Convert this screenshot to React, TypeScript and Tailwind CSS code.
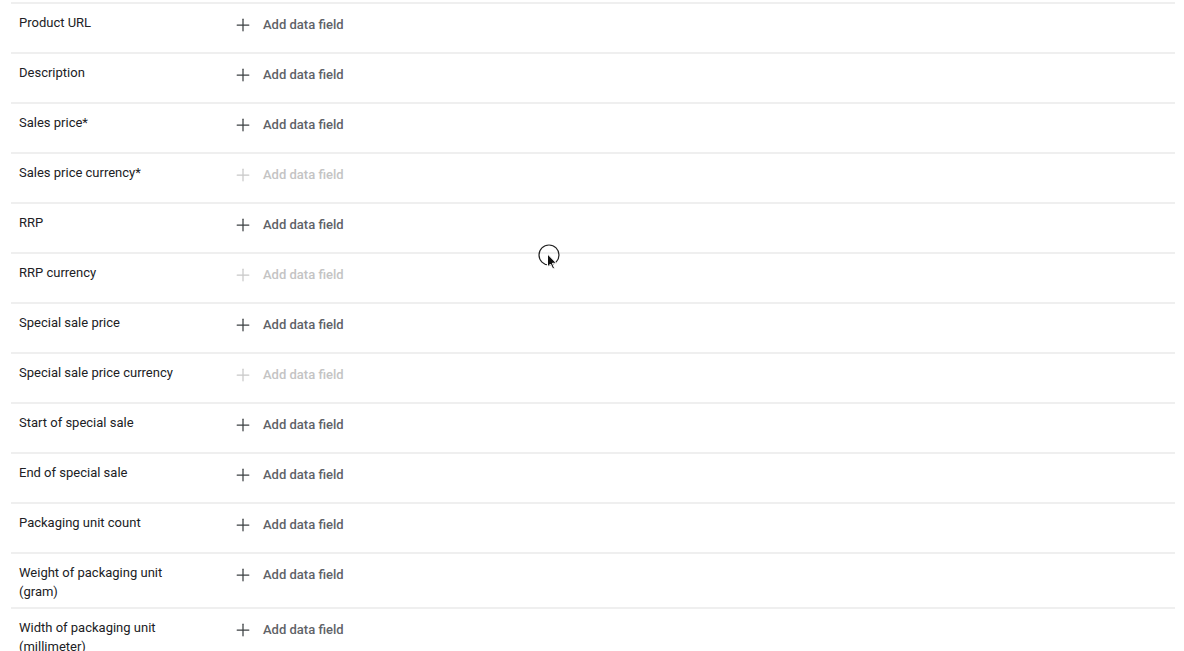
import { Plus } from 'lucide-react'

type Field = { label: string; disabled?: boolean }

const fields: Field[] = [
  { label: 'Product URL' },
  { label: 'Description' },
  { label: 'Sales price*' },
  { label: 'Sales price currency*', disabled: true },
  { label: 'RRP' },
  { label: 'RRP currency', disabled: true },
  { label: 'Special sale price' },
  { label: 'Special sale price currency', disabled: true },
  { label: 'Start of special sale' },
  { label: 'End of special sale' },
  { label: 'Packaging unit count' },
  { label: 'Weight of packaging unit (gram)' },
  { label: 'Width of packaging unit (millimeter)' }
]

function FieldRow({ field }: { field: Field }): React.ReactElement {
  return (
    <div className="flex items-start min-h-[50px] border-t-2 border-[#efefef]">
      <div className="w-[216px] pl-2 pr-[38px] pt-[9px] pb-[6px] text-[13px] leading-[19px] text-[#202124]">
        {field.label}
      </div>
      <button
        disabled={field.disabled}
        className={`flex items-center h-9 mt-[3px] px-1.5 text-[13px] font-medium ${
          field.disabled ? 'text-[#c4c4c4]' : 'text-[#5f6368]'
        }`}
      >
        <Plus size={20} strokeWidth={1.5} className={field.disabled ? 'text-[#c8c8c8]' : 'text-[#3c4043]'} />
        <span className="ml-[10px]">Add data field</span>
      </button>
    </div>
  )
}

export default function App(): React.ReactElement {
  return (
    <div
      className="relative h-[651px] overflow-hidden bg-white"
      style={{ fontFamily: 'Roboto, "Noto Sans", sans-serif' }}
    >
      <div className="pt-[2px] pl-[11px] w-[1175px]">
        {fields.map((f) => (
          <FieldRow key={f.label} field={f} />
        ))}
      </div>

      {/* mouse cursor */}
      <svg className="absolute left-[538px] top-[243px]" width="26" height="32" viewBox="0 0 26 32">
        <circle cx="11" cy="12" r="10" fill="none" stroke="#222" strokeWidth="1.2" />
        <path d="M9.5 11 L9.5 24 L12.5 21 L14.8 26 L16.6 25.2 L14.4 20.3 L18.5 20.3 Z" fill="#111" stroke="#fff" strokeWidth="1" />
      </svg>
    </div>
  )
}
